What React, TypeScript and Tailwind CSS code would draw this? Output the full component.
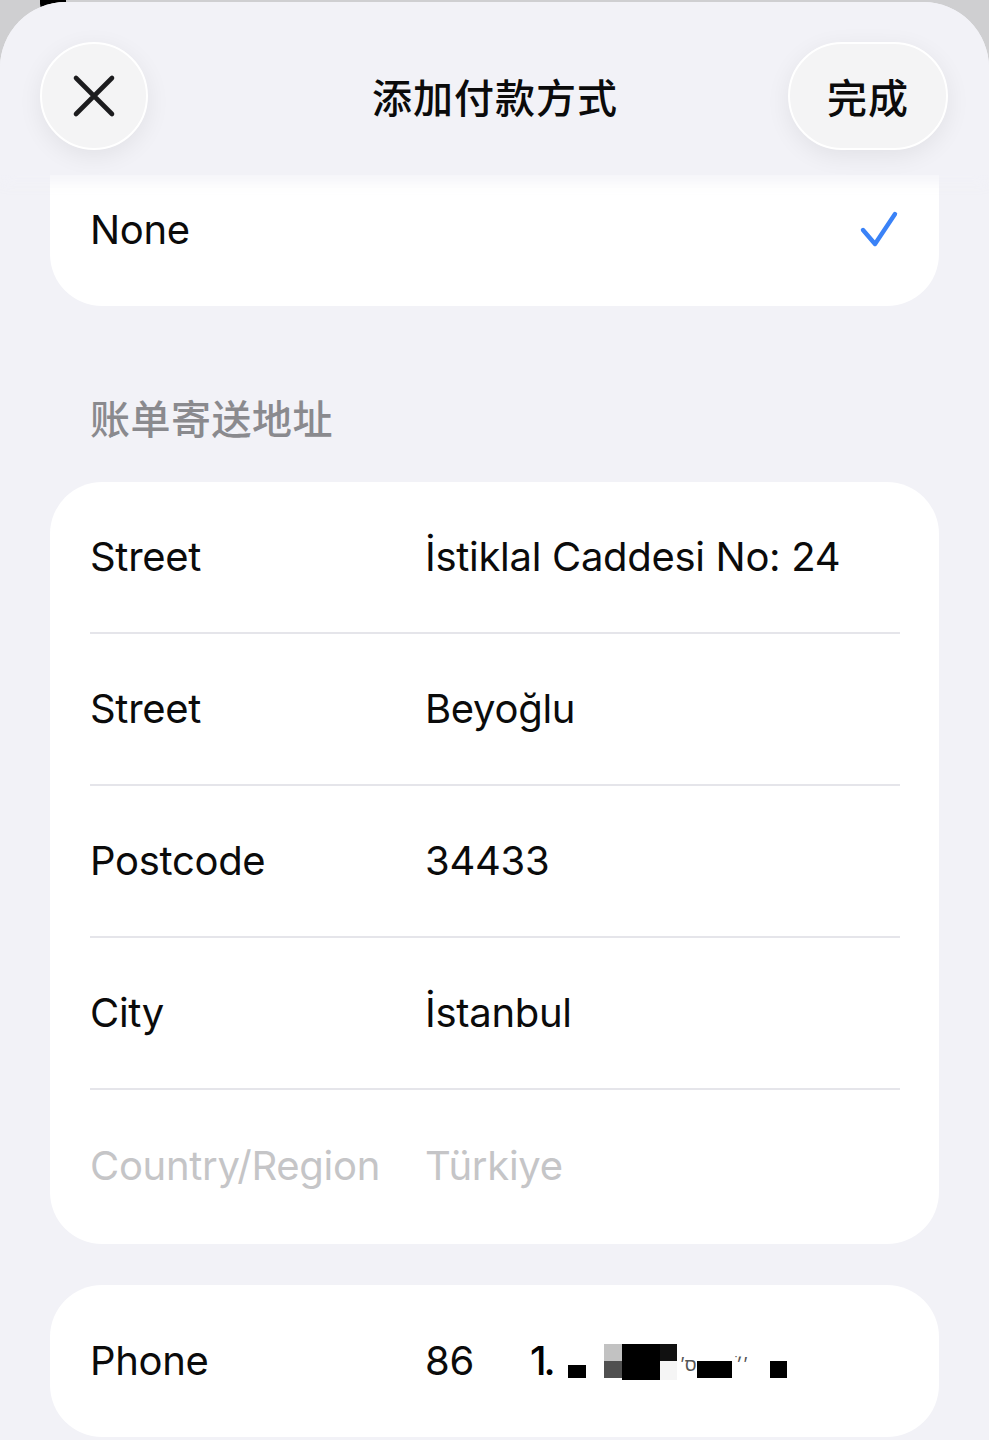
import React from "react";

const latin = { fontFamily: 'Inter, "Noto Sans CJK SC", sans-serif' };
const cjk = { fontFamily: '"Noto Sans CJK SC", Inter, sans-serif' };

function Row({ label, value, last, muted }: { label: string; value: string; last?: boolean; muted?: boolean }) {
  const color = muted ? "text-[#c5c5c7]" : "text-[#0b0b0b]";
  return (
    <div className={`flex items-center h-[152px] mr-[39px] ${last ? "" : "border-b-2 border-[#e5e5ea]"}`}>
      <div className={`w-[335px] shrink-0 text-[40px] tracking-[-0.3px] ${color}`}>{label}</div>
      <div className={`text-[40px] tracking-[-0.3px] ${color}`}>{value}</div>
    </div>
  );
}

function Mosaic() {
  return (
    <div className="flex items-center h-[40px]">
      <span className="w-[38px] text-[40px] font-medium text-black leading-[40px] tracking-[-3px]">1.</span>
      <div className="flex flex-col justify-end h-[34px] w-[18px]">
        <span className="h-[13px] bg-black" />
      </div>
      <div className="w-[18px]" />
      <div className="flex flex-col w-[18px] h-[34px]">
        <span className="h-[17px] bg-[#c2c2c2]" />
        <span className="h-[17px] bg-[#505050]" />
      </div>
      <span className="w-[38px] h-[36px] bg-black self-start mt-[3px]" />
      <div className="flex flex-col w-[17px] h-[36px] self-start mt-[3px]">
        <span className="h-[17px] bg-[#111]" />
        <span className="h-[19px] bg-[#f5f5f5]" />
      </div>
      <div className="flex flex-col w-[20px] h-[34px] justify-start">
        <span className="text-[18px] leading-[18px] text-[#555] pl-[3px] pt-[12px]">ʼס</span>
      </div>
      <div className="flex flex-col justify-end w-[35px] h-[34px]">
        <span className="h-[17px] bg-black" />
      </div>
      <div className="flex flex-col w-[38px] h-[34px]">
        <span className="text-[18px] leading-[18px] text-[#555] pl-[4px] pt-[12px]">ׄ׳ʼ</span>
      </div>
      <div className="flex flex-col justify-end w-[17px] h-[34px]">
        <span className="h-[17px] bg-black" />
      </div>
    </div>
  );
}

export default function App() {
  return (
    <div className="relative w-[989px] h-[1440px] overflow-hidden bg-[#cfcfd1]" style={latin}>
      <div className="absolute left-[40px] top-[-14px] w-[26px] h-[26px] rounded-[8px] bg-black" />
      <div className="relative mt-[2px] h-[1438px] rounded-t-[66px] bg-[#f2f2f7] overflow-hidden">
        {/* header */}
        <div className="relative z-10 h-[173px] bg-[#f2f2f7] shadow-[0_6px_14px_rgba(242,242,247,0.9)]">
          <div className="grid grid-cols-[1fr_auto_1fr] items-center pl-[40px] pr-[41px] pt-[40px]">
            <div className="justify-self-start w-[108px] h-[108px] rounded-full bg-[#f4f4f5] border-2 border-white shadow-[0_6px_24px_rgba(0,0,0,0.07)] flex items-center justify-center">
              <svg width="44" height="44" viewBox="0 0 44 44">
                <path d="M4 4 L40 40 M40 4 L4 40" stroke="#1c1c1e" strokeWidth="4.6" strokeLinecap="round" fill="none" />
              </svg>
            </div>
            <div className="text-[40px] font-medium text-[#0b0b0b] tracking-[1px] pl-[2px]" style={cjk}>添加付款方式</div>
            <div className="justify-self-end w-[160px] h-[108px] rounded-full bg-[#f4f4f5] border-2 border-white shadow-[0_6px_24px_rgba(0,0,0,0.07)] flex items-center justify-center">
              <span className="text-[40px] font-medium text-[#0b0b0b] tracking-[1px]" style={cjk}>完成</span>
            </div>
          </div>
        </div>

        {/* content */}
        <div className="px-[50px]">
          <div className="h-[131px] bg-white rounded-b-[52px] flex items-center justify-between pl-[40px] pr-[40px] pb-[22px]">
            <span className="text-[40px] text-[#0b0b0b] tracking-[-0.3px]">None</span>
            <svg width="40" height="40" viewBox="0 0 40 40">
              <path d="M4 20 L16 34 L36 4" stroke="#3a82f7" strokeWidth="4.4" strokeLinecap="round" strokeLinejoin="round" fill="none" />
            </svg>
          </div>

          <div className="pl-[40px] pt-[87px] pb-[41px] text-[40px] leading-[48px] font-medium text-[#8a8a8e] tracking-[0.5px]" style={cjk}>账单寄送地址</div>

          <div className="bg-white rounded-[52px] pl-[40px]">
            <Row label="Street" value="İstiklal Caddesi No: 24" />
            <Row label="Street" value="Beyoğlu" />
            <Row label="Postcode" value="34433" />
            <Row label="City" value="İstanbul" />
            <div className="h-[154px]">
              <Row label="Country/Region" value="Türkiye" last muted />
            </div>
          </div>

          <div className="mt-[41px] h-[152px] bg-white rounded-[52px] pl-[40px] flex items-center">
            <div className="w-[335px] shrink-0 text-[40px] text-[#0b0b0b] tracking-[-0.3px]">Phone</div>
            <div className="text-[40px] text-[#0b0b0b] tracking-[-0.3px] w-[105px]">86</div>
            <Mosaic />
          </div>
        </div>
      </div>
    </div>
  );
}
